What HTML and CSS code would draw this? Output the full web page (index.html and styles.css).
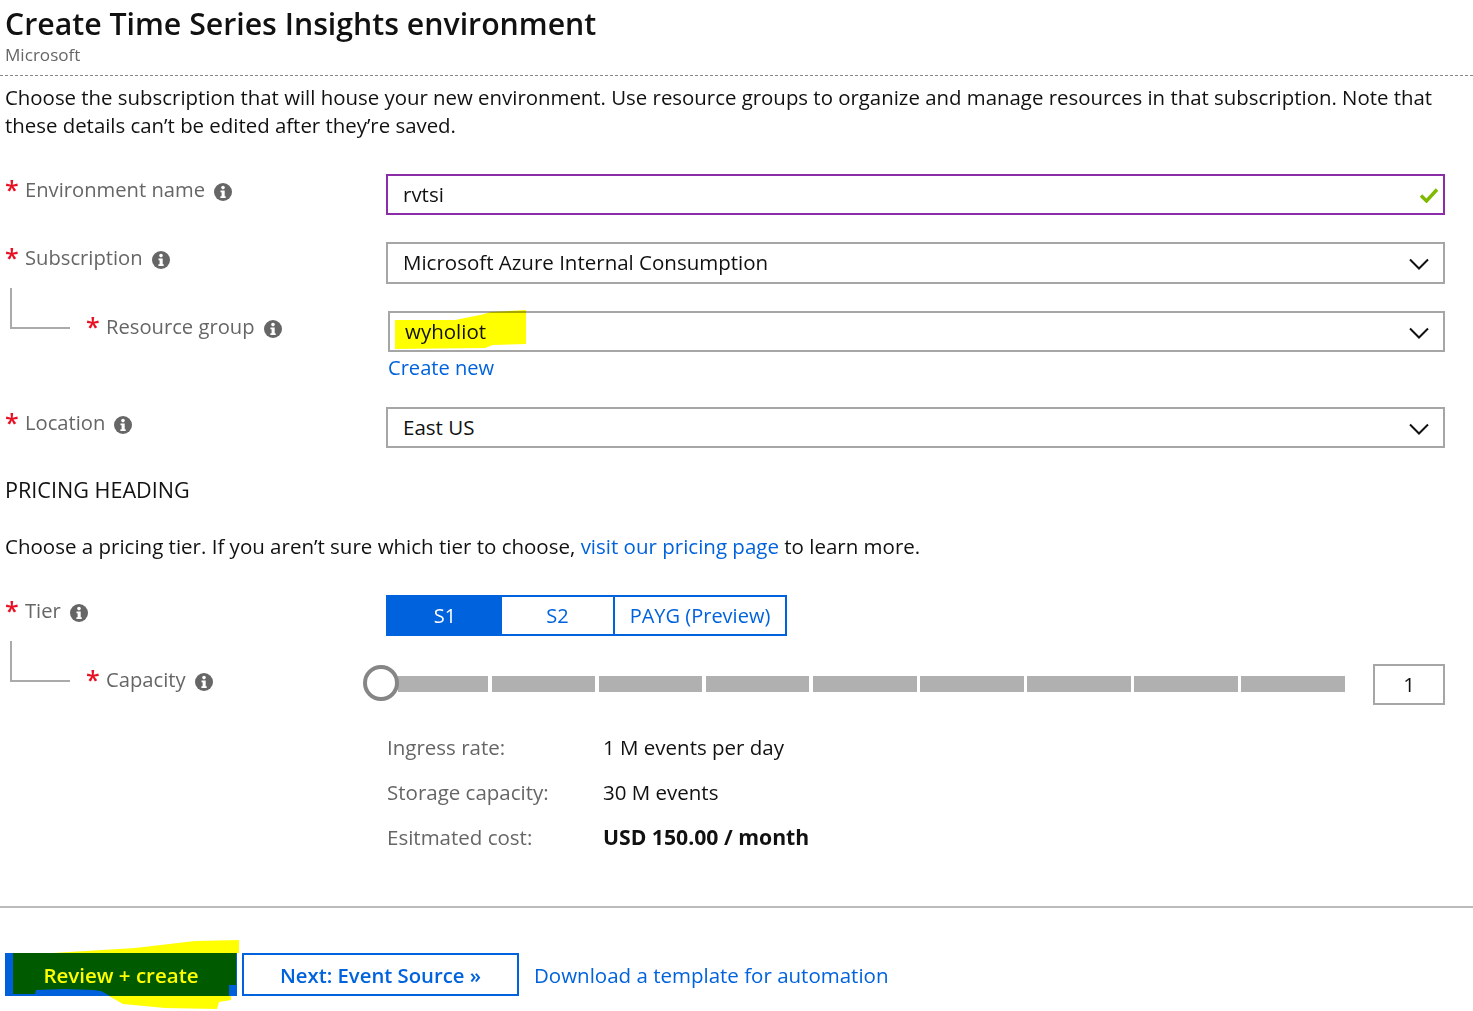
FILE: index.html
```html
<!DOCTYPE html>
<html lang="en">
<head>
<meta charset="utf-8">
<title>Create Time Series Insights environment</title>
<link rel="stylesheet" href="styles.css">
</head>
<body>
<svg class="defs" width="0" height="0" aria-hidden="true">
  <symbol id="info" viewBox="0 0 18 18">
    <circle cx="9" cy="9" r="9" fill="#666"/>
    <circle cx="9" cy="4.6" r="1.8" fill="#fff"/>
    <path d="M6.5 7.4h4.2v5.8h1v1.8H6.4v-1.8h1.2V9.2H6.5z" fill="#fff"/>
  </symbol>
  <symbol id="chev" viewBox="0 0 20 12">
    <path d="M1 1.5l9 9 9-9" fill="none" stroke="#111" stroke-width="2"/>
  </symbol>
</svg>

<header class="head">
  <h1 class="title">Create Time Series Insights environment</h1>
  <div class="publisher">Microsoft</div>
</header>

<p class="intro">Choose the subscription that will house your new environment. Use resource groups to organize and manage resources in that subscription. Note that these details can’t be edited after they’re saved.</p>

<div class="row row-env">
  <div class="label"><span class="star">*</span>Environment name<svg class="info"><use href="#info"/></svg></div>
  <div class="field field-ok">rvtsi
    <svg class="check" viewBox="0 0 20 16"><path d="M2 8.5l5.5 5.5L18 2.5" fill="none" stroke="#7fba00" stroke-width="3.4"/></svg>
  </div>
</div>

<div class="row row-sub">
  <div class="label"><span class="star">*</span>Subscription<svg class="info"><use href="#info"/></svg></div>
  <div class="field">Microsoft Azure Internal Consumption<svg class="chev"><use href="#chev"/></svg></div>
</div>

<div class="row row-rg">
  <div class="label"><span class="elbow"></span><span class="star">*</span>Resource group<svg class="info"><use href="#info"/></svg></div>
  <div class="rg-col">
    <div class="field field-rg">
      <svg class="marker" viewBox="0 0 132 44"><path d="M0 13L60 13 85 8 96 5 131 3 131 37 98 38 90 41 0 42z" fill="#ff0"/></svg>
      <span class="over">wyholiot</span><svg class="chev"><use href="#chev"/></svg>
    </div>
    <a class="link create">Create new</a>
  </div>
</div>

<div class="row row-loc">
  <div class="label"><span class="star">*</span>Location<svg class="info"><use href="#info"/></svg></div>
  <div class="field">East US<svg class="chev"><use href="#chev"/></svg></div>
</div>

<h2 class="section">PRICING HEADING</h2>
<p class="pricing">Choose a pricing tier. If you aren’t sure which tier to choose, <a class="link">visit our pricing page</a> to learn more.</p>

<div class="row row-tier">
  <div class="label"><span class="star">*</span>Tier<svg class="info"><use href="#info"/></svg></div>
  <div class="tiers">
    <span class="tier tier-s1">S1</span>
    <span class="tier tier-s2">S2</span>
    <span class="tier tier-payg">PAYG (Preview)</span>
  </div>
</div>

<div class="row row-cap">
  <div class="label"><span class="elbow"></span><span class="star">*</span>Capacity<svg class="info"><use href="#info"/></svg></div>
  <div class="slider">
    <span class="thumb"></span>
    <div class="track">
      <i class="seg seg-first"></i><i class="seg"></i><i class="seg"></i><i class="seg"></i><i class="seg"></i><i class="seg"></i><i class="seg"></i><i class="seg"></i><i class="seg"></i>
    </div>
    <div class="cap-value">1</div>
  </div>
</div>

<dl class="stats">
  <dt>Ingress rate:</dt><dd>1 M events per day</dd>
  <dt>Storage capacity:</dt><dd>30 M events</dd>
  <dt>Esitmated cost:</dt><dd class="strong">USD 150.00 / month</dd>
</dl>

<hr class="rule">

<footer class="actions">
  <button class="btn btn-primary">
    <svg class="marker-btn" viewBox="0 0 234 72" preserveAspectRatio="none">
      <path d="M0 15H232V58H0z" fill="#005fdb"/>
      <path d="M48 15L130 10 190 3 234 2V15z" fill="#ff0"/>
      <path d="M104 58L118 66 160 70 212 71 214 64 226 62 226 58z" fill="#ff0"/>
      <path d="M8 15H231V47H224V58H105L96 53 88 52 60 51 31 52 30 56H8z" fill="#005a00"/>
    </svg>
    <span class="over">Review + create</span>
  </button>
  <button class="btn btn-next">Next: Event Source »</button>
  <a class="link download">Download a template for automation</a>
</footer>
</body>
</html>
```
FILE: styles.css
```css
* { box-sizing: border-box; }
html, body { margin: 0; }
body {
  height: 1011px;
  overflow: hidden;
  background: #fff;
  color: #111;
  font-family: "Open Sans", "Liberation Sans", sans-serif;
  font-size: 20.5px;
  line-height: 28px;
}
.defs { position: absolute; }
.head {
  height: 76px;
  padding: 2px 0 0 5px;
  border-bottom: 1px dashed #888;
}
.title {
  margin: 0;
  font-size: 30.25px;
  line-height: 44px;
  font-weight: 600;
  color: #111;
}
.publisher { font-size: 17.1px; line-height: 18px; color: #666; }
.intro { margin: 7px 28px 0 5px; height: 56px; font-size: 20.4px; }
.row {
  display: grid;
  grid-template-columns: 381px 1059px;
  margin-left: 5px;
}
.row-env { margin-top: 35px; height: 41px; }
.row-sub { margin-top: 27px; height: 42px; }
.row-rg { margin-top: 27px; height: 69px; }
.row-loc { margin-top: 27px; height: 41px; }
.row-tier { margin-top: 0; height: 41px; }
.row-cap { margin-top: 28px; height: 41px; }
.label {
  display: flex;
  align-items: flex-start;
  height: 30px;
  margin-top: 1px;
  color: #666;
  font-size: 20.2px;
}
.star {
  width: 20px;
  color: #e81123;
  font-size: 25px;
  font-weight: 600;
  line-height: 28px;
}
.info { width: 18px; height: 18px; margin: 8px 0 0 9px; flex: none; }
.elbow {
  flex: none;
  width: 60px;
  height: 41px;
  margin: -24px 16px 0 5px;
  border-left: 2px solid #aaa;
  border-bottom: 2px solid #aaa;
}
.field {
  position: relative;
  display: flex;
  align-items: center;
  height: 100%;
  padding: 0 15px 2px;
  border: 2px solid #a6a6a6;
  background: #fff;
}
.field-ok { border-color: #8b2da8; }
.field-rg { height: 41px; margin-left: 2px; }
.check { position: absolute; right: 4px; top: 11px; width: 20px; height: 16px; }
.chev { position: absolute; right: 14px; top: 14px; width: 20px; height: 12px; }
.marker { position: absolute; left: 5px; top: -6px; width: 132px; height: 44px; mix-blend-mode: multiply; }
.over { position: relative; }
.rg-col { display: flex; flex-direction: column; }
.link { color: #0062dc; text-decoration: none; }
.create { margin: 2px 0 0 2px; font-size: 20.1px; }
.section {
  margin: 27px 0 0 5px;
  font-size: 21.6px;
  line-height: 30px;
  font-weight: 400;
  color: #111;
}
.pricing { margin: 27px 0 35px 5px; height: 28px; }
.tiers {
  display: flex;
  width: 401px;
  height: 41px;
  border: 2px solid #0062dc;
  color: #0062dc;
  font-size: 20px;
}
.tier { display: flex; align-items: center; justify-content: center; }
.tier-s1 { width: 114px; background: #0062dc; color: #fff; }
.tier-s2 { width: 113px; border-right: 2px solid #0062dc; }
.tier-payg { flex: 1; }
.slider { display: flex; align-items: flex-start; height: 41px; }
.thumb {
  position: relative;
  z-index: 1;
  flex: none;
  width: 36px;
  height: 36px;
  margin: 1px -1px 0 -23px;
  border: 4px solid #868686;
  border-radius: 50%;
  background: #fff;
}
.track { display: flex; gap: 3.5px; width: 947px; margin: 12px 28px 0 0; }
.seg { flex: 1; height: 16px; background: #b0b0b0; }
.seg-first { flex: none; width: 90px; }
.cap-value {
  flex: none;
  display: flex;
  align-items: center;
  justify-content: center;
  width: 72px;
  height: 41px;
  padding-bottom: 2px;
  border: 2px solid #a6a6a6;
}
.stats {
  display: grid;
  grid-template-columns: 216px 1fr;
  row-gap: 17px;
  margin: 28px 0 0 387px;
  height: 118px;
}
.stats dt { color: #666; }
.stats dd { margin: 0; }
.stats .strong { font-weight: 700; font-size: 21.2px; }
.rule { height: 2px; margin: 55px 0 0; border: 0; background: #bbb; }
.actions {
  display: flex;
  align-items: center;
  margin: 45px 0 0 5px;
  height: 43px;
}
.btn {
  font: inherit;
  height: 43px;
  padding: 0;
  background: #fff;
  cursor: pointer;
}
.btn-primary {
  position: relative;
  width: 232px;
  border: 0;
  color: #ff0;
  font-weight: 600;
  font-size: 20.5px;
  background: none;
}
.marker-btn { position: absolute; left: 0; top: -15px; width: 234px; height: 72px; }
.btn-next {
  width: 277px;
  margin: 0 15px 0 5px;
  border: 2px solid #0062dc;
  color: #0062dc;
  font-weight: 600;
  font-size: 20.3px;
}
.download { font-size: 20.5px; }
```
